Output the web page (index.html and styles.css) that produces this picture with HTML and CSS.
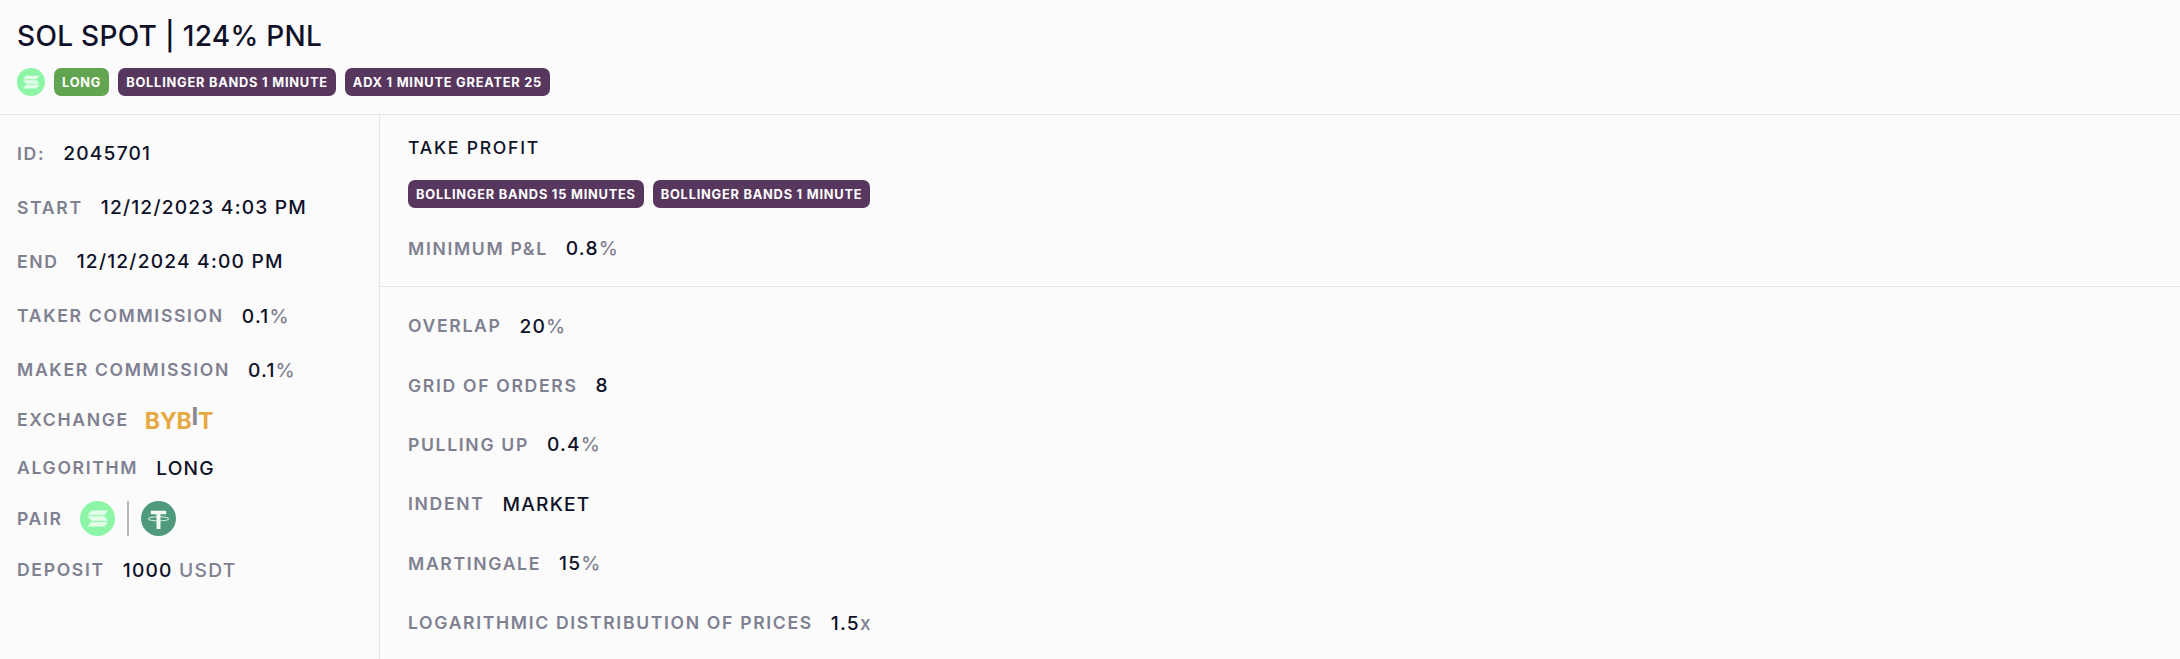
FILE: index.html
```html
<!DOCTYPE html>
<html lang="en">
<head>
<meta charset="utf-8">
<title>SOL SPOT</title>
<link rel="stylesheet" href="styles.css">
</head>
<body>
<header class="head">
  <h1 class="title">SOL SPOT | 124% PNL</h1>
  <div class="tags">
    <svg class="coin-sm" viewBox="0 0 32 32"><circle cx="16" cy="16" r="16" fill="#8df5a6"/><path d="M10.500 9h14.500l-2.700 3.600H7.500z M7.500 14.200h14.800l2.700 3.600H10.500z M10.500 19.400h14.500l-2.700 3.600H7.500z" fill="#e4fde9" stroke="#e4fde9" stroke-width=".6" stroke-linejoin="round"/></svg>
    <span class="tag green">LONG</span>
    <span class="tag purple">BOLLINGER BANDS 1 MINUTE</span>
    <span class="tag purple">ADX 1 MINUTE GREATER 25</span>
  </div>
</header>
<main class="body">
  <aside class="left">
    <div class="row r54"><span class="lab">ID:</span><span class="val">2045701</span></div>
    <div class="row r54"><span class="lab">START</span><span class="val">12/12/2023 4:03 PM</span></div>
    <div class="row r54"><span class="lab">END</span><span class="val">12/12/2024 4:00 PM</span></div>
    <div class="row r54"><span class="lab">TAKER COMMISSION</span><span class="val">0.1<i class="unit">%</i></span></div>
    <div class="row r54"><span class="lab">MAKER COMMISSION</span><span class="val">0.1<i class="unit">%</i></span></div>
    <div class="row r46"><span class="lab">EXCHANGE</span><span class="bybit">BYB<span class="bybit-i">I</span>T</span></div>
    <div class="row r50"><span class="lab">ALGORITHM</span><span class="val">LONG</span></div>
    <div class="row r52"><span class="lab">PAIR</span>
      <span class="pair">
        <svg class="coin" viewBox="0 0 32 32"><circle cx="16" cy="16" r="16" fill="#8df5a6"/><path d="M10.500 9h14.500l-2.700 3.600H7.500z M7.500 14.200h14.800l2.700 3.600H10.500z M10.500 19.400h14.500l-2.700 3.600H7.500z" fill="#e4fde9" stroke="#e4fde9" stroke-width=".6" stroke-linejoin="round"/></svg>
        <span class="sep"></span>
        <svg class="coin" viewBox="0 0 32 32"><circle cx="16" cy="16" r="16" fill="#4f9a7c"/><path d="M9 9h14v3.200h-5.200V25.500h-3.600V12.200H9z" fill="#f4fbf7"/><ellipse cx="16" cy="16.300" rx="9.500" ry="1.900" fill="none" stroke="#f4fbf7" stroke-width=".8"/></svg>
      </span>
    </div>
    <div class="row r50"><span class="lab">DEPOSIT</span><span class="val">1000 <i class="unit unit-w">USDT</i></span></div>
  </aside>
  <section class="right">
    <div class="tp">
      <div class="tp-title">TAKE PROFIT</div>
      <div class="tags tp-tags">
        <span class="tag purple">BOLLINGER BANDS 15 MINUTES</span>
        <span class="tag purple">BOLLINGER BANDS 1 MINUTE</span>
      </div>
      <div class="row"><span class="lab">MINIMUM P&amp;L</span><span class="val">0.8<i class="unit">%</i></span></div>
    </div>
    <div class="params">
      <div class="row r60"><span class="lab">OVERLAP</span><span class="val">20<i class="unit">%</i></span></div>
      <div class="row r60"><span class="lab">GRID OF ORDERS</span><span class="val">8</span></div>
      <div class="row r60"><span class="lab">PULLING UP</span><span class="val">0.4<i class="unit">%</i></span></div>
      <div class="row r60"><span class="lab">INDENT</span><span class="val">MARKET</span></div>
      <div class="row r60"><span class="lab">MARTINGALE</span><span class="val">15<i class="unit">%</i></span></div>
      <div class="row r60"><span class="lab">LOGARITHMIC DISTRIBUTION OF PRICES</span><span class="val">1.5<i class="unit">x</i></span></div>
    </div>
  </section>
</main>
</body>
</html>
```
FILE: styles.css
```css
* { box-sizing: border-box; }
html, body { margin: 0; height: 100%; overflow: hidden; }
body {
  background: #fbfbfc;
  color: #0f1128;
  font-family: Inter, "Liberation Sans", sans-serif;
  display: flex;
  flex-direction: column;
}
.head {
  height: 115px;
  padding: 20px 17px 0;
  border-bottom: 1px solid #e4e4e7;
}
.title {
  margin: 0;
  font-family: Inter, "Liberation Sans", sans-serif;
  font-size: 28px;
  line-height: 32px;
  font-weight: 500;
  letter-spacing: 0.3px;
}
.tags { display: flex; align-items: center; gap: 9px; margin-top: 16px; }
.coin-sm { width: 28px; height: 28px; flex: none; }
.tag {
  height: 28px;
  display: inline-flex;
  align-items: center;
  padding: 0 8px;
  border-radius: 7px;
  color: #fff;
  font-size: 12.8px;
  font-weight: 700;
  letter-spacing: 0.78px;
}
.green { background: #62a550; }
.purple { background: #58375e; }
.body { flex: 1; display: flex; min-height: 0; }
.left {
  width: 380px;
  flex: none;
  padding: 11px 17px 0;
  border-right: 1px solid #e4e4e7;
}
.right { flex: 1; }
.row { display: flex; align-items: center; gap: 18px; }
.r54 { height: 54.2px; }
.r46 { height: 46px; }
.r50 { height: 50px; }
.r52 { height: 52px; }
.r60 { height: 59.4px; }
.lab {
  color: #7f8090;
  font-size: 17.6px;
  font-weight: 600;
  letter-spacing: 1.66px;
}
.val {
  color: #0f1128;
  font-size: 19.2px;
  font-weight: 500;
  letter-spacing: 1.2px;
}
.unit { font-style: normal; color: #7f8090; }
.unit-w { letter-spacing: 1.3px; }
.bybit {
  color: #e6a941;
  font-size: 23px;
  font-weight: 700;
  line-height: 24px;
  letter-spacing: -0.2px;
  display: flex;
  align-items: flex-start;
  margin-left: -2px;
  padding-top: 2px;
}
.bybit-i { color: #8a8a94; font-size: 24px; line-height: 16px; }
.pair { display: flex; align-items: center; gap: 12px; margin-left: -1px; }
.coin { width: 35px; height: 35px; flex: none; }
.sep { width: 2px; height: 35px; background: #b9b9c0; }
.tp { height: 172px; padding: 21px 28px 0; border-bottom: 1px solid #e4e4e7; }
.tp-title { font-size: 17.6px; line-height: 24px; font-weight: 500; letter-spacing: 1.76px; }
.tp-tags { margin-top: 20px; }
.tp .row { margin-top: 27px; height: 26px; }
.params { padding: 9px 28px 0; }
```
